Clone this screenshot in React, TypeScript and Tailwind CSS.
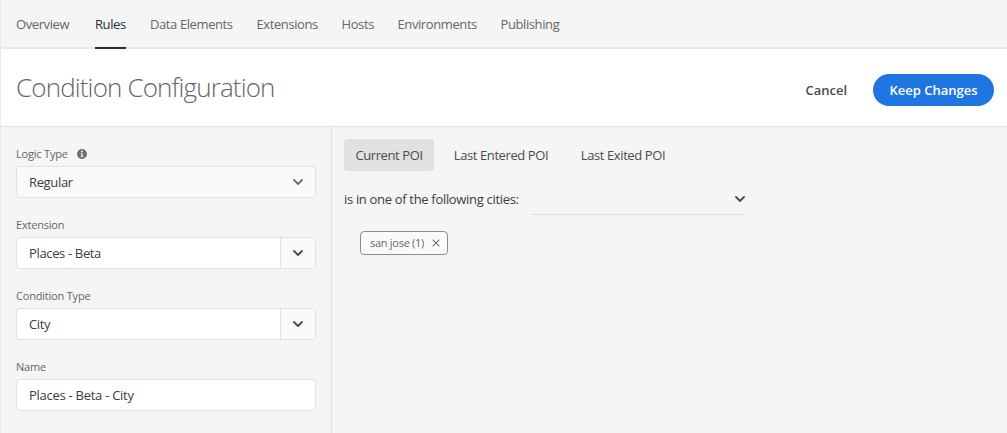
import type { ReactNode } from 'react';

const navItems = [
  { label: 'Overview', width: 'w-[55px]' },
  { label: 'Rules', width: 'w-[31px]', active: true },
  { label: 'Data Elements', width: 'w-[82.5px]' },
  { label: 'Extensions', width: 'w-[61px]' },
  { label: 'Hosts', width: 'w-[32px]' },
  { label: 'Environments', width: 'w-[79px]' },
  { label: 'Publishing', width: 'w-[60px]' },
];

function Chevron({ className = 'text-[#4b4b4b]' }: { className?: string }) {
  return (
    <svg viewBox="0 0 10 6" className={`h-[6px] w-[10px] shrink-0 ${className}`} aria-hidden="true">
      <path d="M1 1l4 4 4-4" fill="none" stroke="currentColor" strokeWidth="1.8" strokeLinecap="round" strokeLinejoin="round" />
    </svg>
  );
}

function InfoIcon() {
  return (
    <svg viewBox="0 0 10 10" className="h-[10px] w-[10px]" aria-hidden="true">
      <circle cx="5" cy="5" r="5" fill="#6e6e6e" />
      <circle cx="5" cy="2.5" r="0.95" fill="#f5f5f5" />
      <path d="M3.7 4.2h2v3h.8v.9H3.6v-.9h.8V5.1h-.7z" fill="#f5f5f5" />
    </svg>
  );
}

function Field({ label, info, children }: { label: string; info?: boolean; children: ReactNode }) {
  return (
    <div className="flex h-[71px] flex-col">
      <div className="flex h-[26px] items-center gap-[9px] pt-[2px] text-[11px] tracking-[-0.2px] text-[#666666]">
        <span>{label}</span>
        {info && <InfoIcon />}
      </div>
      {children}
    </div>
  );
}

function ComboBox({ value }: { value: string }) {
  return (
    <div className="flex h-8 overflow-hidden rounded border border-[#e1e1e1] bg-white">
      <div className="flex flex-1 items-center pt-[2px] pl-3 tracking-[-0.35px] text-[#3c3c3c]">{value}</div>
      <button className="flex w-[35px] items-center justify-center border-l border-[#e1e1e1] bg-[#fafafa]">
        <Chevron />
      </button>
    </div>
  );
}

export default function App() {
  return (
    <div className="flex h-[433px] w-[1007px] flex-col overflow-hidden whitespace-nowrap border-l border-[#eaeaea] bg-[#f5f5f5] font-['Open_Sans','Noto_Sans',sans-serif] text-[13px] text-[#4b4b4b]">
      <nav className="flex h-[49px] shrink-0 gap-6 border-b-2 border-[#e8e8e8] pl-[15px] tracking-[-0.4px]">
        {navItems.map((item) => (
          <a
            key={item.label}
            className={`-mb-[2px] flex items-center border-b-2 pt-[2px] ${item.width} ${item.active ? 'border-[#2c2c2c] text-[#2c2c2c]' : 'border-transparent text-[#666666]'}`}
          >
            {item.label}
          </a>
        ))}
      </nav>

      <header className="flex h-[78px] shrink-0 items-center border-b border-[#e1e1e1] bg-white pl-[15px] pr-[13px]">
        <h1 className="flex-1 text-[26px] font-light tracking-[-0.86px] text-[#666666]">Condition Configuration</h1>
        <button className="mt-[5px] mr-[26px] h-8 pt-[2px] font-semibold">Cancel</button>
        <button className="mt-[5px] h-8 w-[121px] rounded-full bg-[#1f76e2] pt-[2px] font-semibold text-white">Keep Changes</button>
      </header>

      <div className="flex flex-1">
        <aside className="w-[331px] border-r border-[#e1e1e1] px-[15px] pt-[13px]">
          <Field label="Logic Type" info>
            <button className="flex h-8 items-center justify-between rounded border border-[#e1e1e1] bg-[#fafafa] pr-3 pl-3 tracking-[-0.35px] text-[#3c3c3c]">
              <span className="pt-[2px]">Regular</span>
              <Chevron className="text-[#6e6e6e]" />
            </button>
          </Field>
          <Field label="Extension">
            <ComboBox value="Places - Beta" />
          </Field>
          <Field label="Condition Type">
            <ComboBox value="City" />
          </Field>
          <Field label="Name">
            <div className="flex h-8 items-center rounded border border-[#e1e1e1] bg-white pt-[2px] pl-3 tracking-[-0.27px] text-[#3c3c3c]">Places - Beta - City</div>
          </Field>
        </aside>

        <main className="flex-1 pt-3 pl-3">
          <div className="flex h-8 gap-2 tracking-[-0.4px]">
            <button className="w-[90px] rounded bg-[#e1e1e1] pt-[2px]">Current POI</button>
            <button className="w-[118px] pt-[2px]">Last Entered POI</button>
            <button className="w-[110px] pt-[2px]">Last Exited POI</button>
          </div>
          <div className="mt-3 flex h-8 gap-3">
            <span className="flex w-[175px] items-center pt-[2px] tracking-[-0.32px] text-[#3c3c3c]">is in one of the following cities:</span>
            <div className="flex w-[214px] items-center justify-end border-b border-[#dedede]">
              <Chevron />
            </div>
          </div>
          <div className="mt-4 ml-4 flex h-6 w-[88px] items-center justify-between rounded border border-[#8e8e8e] bg-[#fafafa] pr-[7px] pl-[9px] text-[11px] tracking-[-0.28px] text-[#666666]">
            san jose (1)
            <svg viewBox="0 0 8 8" className="h-2 w-2" aria-hidden="true">
              <path d="M.7.7l6.6 6.6M7.3.7L.7 7.3" stroke="#6e6e6e" strokeWidth="1.1" />
            </svg>
          </div>
        </main>
      </div>
    </div>
  );
}
